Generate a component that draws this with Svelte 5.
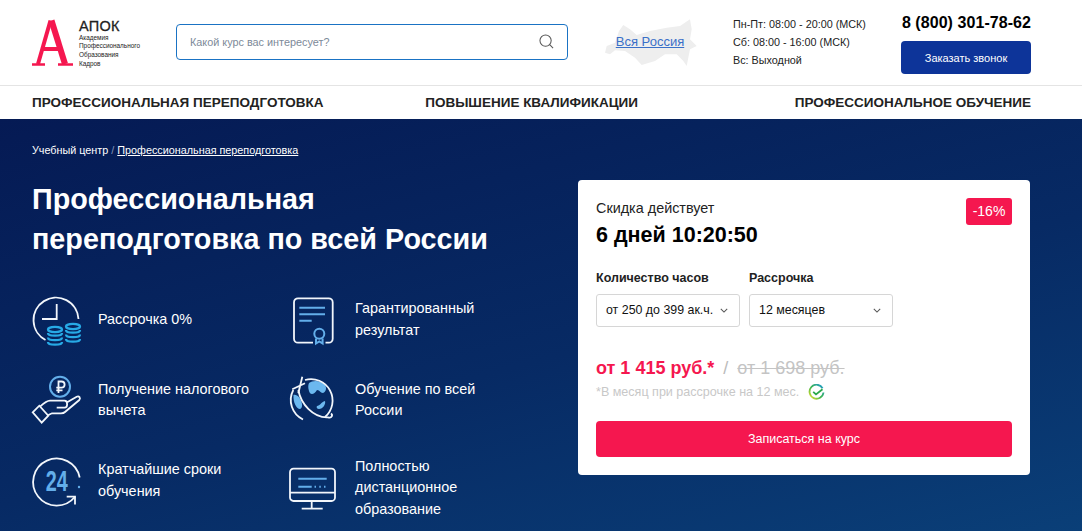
<script>
	const hours = ['Пн-Пт: 08:00 - 20:00 (МСК)', 'Сб: 08:00 - 16:00 (МСК)', 'Вс: Выходной'];
	const nav = ['Профессиональная переподготовка', 'Повышение квалификации', 'Профессиональное обучение'];
</script>

{#snippet chevron()}
	<svg class="chevron" width="8" height="5" viewBox="0 0 10 6"><path d="M1 1l4 4 4-4" /></svg>
{/snippet}

<div class="page">
	<header class="top">
		<div class="logo">
			<svg width="42" height="50" viewBox="0 0 42 50">
				<path class="logo-left" d="M18.5 3.5L6 47" />
				<path class="logo-right" d="M19.5 3.5L33 47" />
				<path class="logo-bar" d="M9 32H30" />
				<path class="logo-foot" d="M0 47.5H13M26 47.5H41" />
			</svg>
			<div class="logo-text">
				<strong>АПОК</strong>
				<span>Академия</span>
				<span>Профессионального</span>
				<span>Образования</span>
				<span>Кадров</span>
			</div>
		</div>

		<div class="search">
			<span>Какой курс вас интересует?</span>
			<svg width="15" height="15" viewBox="0 0 16 16">
				<circle cx="7" cy="7" r="6" />
				<path d="M11.4 11.4L15 15" />
			</svg>
		</div>

		<div class="region">
			<svg class="map" width="93" height="50" viewBox="0 0 93 50">
				<path d="M1 34.7L2.7 28L11 24.7L15 13L19.3 7L26 11.3L32.7 17L46 13L62.7 9.7L76 8L86 1.3L87.7 11.3L86 21.3L92.7 28L86 31.3L84.3 39.7L82.7 48L79.3 43L72.7 36.3L61 36.3L51 43L37.7 47L31 39.7L21 33L11 32.3L6 36.3Z" />
			</svg>
			<a href="#region">Вся Россия</a>
		</div>

		<div class="hours">
			{#each hours as line}
				<div>{line}</div>
			{/each}
		</div>

		<div class="contact">
			<div class="phone">8 (800) 301-78-62</div>
			<button class="call">Заказать звонок</button>
		</div>
	</header>

	<nav class="menu">
		{#each nav as item}
			<a href="#nav">{item}</a>
		{/each}
	</nav>

	<section class="hero">
		<div class="left">
			<div class="crumbs">Учебный центр <i>/</i> <a href="#crumb">Профессиональная переподготовка</a></div>
			<h1>Профессиональная<br />переподготовка по всей России</h1>

			<div class="features">
				<div class="col col-first">
					<div class="item">
						<svg class="icon" viewBox="0 0 52 52">
							<path class="w" d="M46.5 25A22.5 22.5 0 1 0 13.5 46" />
							<path class="w" d="M24.7 10V25H10" />
							<g class="coin">
								<ellipse cx="23" cy="35.5" rx="7" ry="2.6" />
								<path d="M16 39c0 3.6 14 3.6 14 0M16 43.5c0 3.6 14 3.6 14 0M16 48c0 3.6 14 3.6 14 0" />
								<ellipse cx="41" cy="32.5" rx="7" ry="2.6" />
								<path d="M34 36c0 3.6 14 3.6 14 0M34 40.5c0 3.6 14 3.6 14 0M34 45c0 3.6 14 3.6 14 0" />
							</g>
						</svg>
						<span>Рассрочка 0%</span>
					</div>
					<div class="item">
						<svg class="icon" viewBox="0 0 52 52">
							<circle class="b" cx="28" cy="12.7" r="10" />
							<path class="w" d="M26.5 19V7.5H29.5a3.1 3.1 0 0 1 0 6.2H24.3M24.3 16.4H30.5" />
							<path class="w" d="M0.7 38.3L7.3 31.7L16.3 41.7L9.7 48.7Z" />
							<path class="w" d="M8 32.7C12 29 15 26.7 18 26.7H32.5C36 26.7 36 33.7 32.5 33.7H24.7M34.7 28.5L44.7 22.7C47 21.5 49 24 47.3 26L33 38C32 39 31 39.3 29 39.3H20L16.3 41" />
						</svg>
						<span>Получение налогового<br />вычета</span>
					</div>
					<div class="item">
						<svg class="icon" viewBox="0 0 52 52">
							<path class="w" d="M47.7 22.5A23.5 23.5 0 1 0 43 41.7" />
							<path class="w" d="M34.7 41.7H43V49.5" />
							<circle class="dot" cx="47" cy="32" r="1.2" />
							<text class="num" x="13.8" y="36" textLength="22" lengthAdjust="spacingAndGlyphs">24</text>
						</svg>
						<span>Кратчайшие сроки<br />обучения</span>
					</div>
				</div>

				<div class="col">
					<div class="item">
						<svg class="icon" viewBox="0 0 52 52">
							<path class="w" d="M24 48.7H9a4 4 0 0 1-4-4V8.3a4 4 0 0 1 4-4H39.7a4 4 0 0 1 4 4V44.7a4 4 0 0 1-4 4H36.5" />
							<path class="b" d="M10.3 13.7H36M10.3 20.3H36M10.3 26.7H22.7" />
							<circle class="b" cx="30.3" cy="39.8" r="5" />
							<path class="b" d="M27 44.5V49.5L30.3 47.5L33.6 49.5V44.5" />
						</svg>
						<span>Гарантированный<br />результат</span>
					</div>
					<div class="item">
						<svg class="icon" viewBox="0 0 52 52">
							<path class="land" d="M4.5 21C8 20 12 24 13 30C13.5 33 12 35 10.5 35C7 34 4 28 4.5 21Z" />
							<path class="land" d="M20 9C24 6 31 6 36 11C38 14 37 18 34 19C31 19 31 16 28 16C25 21 21 21 20 17C19 14 19 11 20 9Z" />
							<path class="land" d="M28 32C31 32 32 28 36 27C37 30 34 35 30 35C28 35 27 33 28 32Z" />
							<path class="w" d="M16 6A21.5 21.5 0 0 1 36 43" />
							<path class="w" d="M4.3 16A21.5 21.5 0 0 0 14 45.5" />
							<path class="w" d="M9.3 16C12 30 24 44 39 43.3C43 44.5 44 41 42 39.5" />
							<path class="w" d="M13.3 2.7L9.3 19.3M3.3 15.3L16 9.3" />
						</svg>
						<span>Обучение по всей<br />России</span>
					</div>
					<div class="item long">
						<svg class="icon" viewBox="0 0 52 52">
							<rect class="w" x="1" y="6.7" width="45" height="32.3" rx="3.5" />
							<path class="w" d="M1 30.7H46M22.7 39V46.7M12.7 46.7H33.7" />
							<path class="b" d="M9.3 16.7H37.7M9.3 24.7H22.7" />
							<path class="b" d="M25.5 24.7H27M30.3 24.7H31.8M35 24.7H36.5" />
						</svg>
						<span>Полностью<br />дистанционное<br />образование</span>
					</div>
				</div>
			</div>
		</div>

		<div class="card">
			<div class="timer">
				<div>
					<div class="timer-label">Скидка действует</div>
					<div class="timer-value">6 дней 10:20:50</div>
				</div>
				<div class="badge">-16%</div>
			</div>

			<div class="fields">
				<div class="field">
					<div class="field-label">Количество часов</div>
					<div class="select">от 250 до 399 ак.ч.{@render chevron()}</div>
				</div>
				<div class="field">
					<div class="field-label">Рассрочка</div>
					<div class="select">12 месяцев{@render chevron()}</div>
				</div>
			</div>

			<div class="price">
				<b>от 1 415 руб.*</b>
				<i>/</i>
				<s>от 1 698 руб.</s>
			</div>
			<div class="note">
				*В месяц при рассрочке на 12 мес.
				<svg width="17" height="17" viewBox="0 0 17 17">
					<defs>
						<linearGradient id="sber" x1="0" y1="1" x2="1" y2="0">
							<stop offset="0" stop-color="#f2e52e" />
							<stop offset="0.45" stop-color="#3fb54a" />
							<stop offset="1" stop-color="#1c9ad6" />
						</linearGradient>
					</defs>
					<path d="M14.6 4.2A7 7 0 1 0 15.5 8.5" fill="none" stroke="url(#sber)" stroke-width="1.8" />
					<path d="M5.2 7.8L8 10.4L14.5 5.2" fill="none" stroke="#2ba84a" stroke-width="1.8" />
				</svg>
			</div>

			<button class="enroll">Записаться на курс</button>
		</div>
	</section>
</div>

<style>
	:global(body) {
		margin: 0;
		overflow: hidden;
		font-family: 'Liberation Sans', Arial, sans-serif;
	}

	.page {
		height: 531px;
		overflow: hidden;
		background: #fff;
	}

	.top {
		display: flex;
		align-items: center;
		height: 85px;
		padding: 0 51px 0 32px;
		box-sizing: border-box;
	}

	.logo {
		display: flex;
		width: 144px;
		flex: none;
		gap: 5px;
		align-items: flex-start;
	}

	.logo path {
		fill: none;
		stroke: #f5174f;
	}

	.logo .logo-left {
		stroke-width: 4;
	}

	.logo .logo-right {
		stroke-width: 6;
	}

	.logo .logo-bar {
		stroke-width: 4;
	}

	.logo .logo-foot {
		stroke-width: 2.5;
	}

	.logo-text {
		display: flex;
		flex-direction: column;
		color: #222;
		font-size: 6.4px;
		line-height: 8.6px;
	}

	.logo-text strong {
		font-size: 14.5px;
		font-weight: 400;
		line-height: 16px;
		margin-top: 1px;
		letter-spacing: 0.3px;
		-webkit-text-stroke: 0.3px #222;
	}

	.search {
		display: flex;
		align-items: center;
		justify-content: space-between;
		width: 392px;
		height: 36px;
		flex: none;
		box-sizing: border-box;
		margin-bottom: 2px;
		padding: 0 13px;
		border: 1px solid #1a73c4;
		border-radius: 4px;
		color: #7d8a99;
		font-size: 10.85px;
	}

	.search svg {
		fill: none;
		stroke: #555;
		stroke-width: 1.1;
	}

	.region {
		position: relative;
		display: flex;
		align-items: center;
		justify-content: center;
		width: 92px;
		height: 50px;
		margin-left: 36px;
		padding-bottom: 2px;
		box-sizing: border-box;
		flex: none;
	}

	.map {
		position: absolute;
		left: 0;
		top: 0;
		fill: #eeeeee;
		filter: blur(0.6px);
	}

	.region a {
		position: relative;
		color: #3a70c8;
		font-size: 13px;
	}

	.hours {
		width: 168px;
		margin-left: 37px;
		margin-bottom: 2px;
		flex: none;
		color: #222;
		font-size: 10.8px;
		line-height: 18px;
	}

	.contact {
		width: 130px;
		flex: none;
	}

	.phone {
		color: #000;
		font-size: 16px;
		font-weight: 700;
		letter-spacing: 0.06px;
		line-height: 20px;
		text-align: right;
		margin-top: 2px;
		margin-bottom: 8px;
	}

	.call {
		display: block;
		width: 130px;
		height: 33px;
		padding: 0;
		border: 0;
		border-radius: 4px;
		background: #0d3499;
		color: #fff;
		font: 11px 'Liberation Sans', Arial, sans-serif;
	}

	.menu {
		display: flex;
		justify-content: space-between;
		align-items: center;
		height: 33px;
		padding: 0 51px 0 32px;
		border-top: 1px solid #e4e4e4;
	}

	.menu a {
		color: #222;
		font-size: 13.5px;
		font-weight: 700;
		text-decoration: none;
		text-transform: uppercase;
	}

	.menu a:nth-child(2) {
		margin-right: 55px;
	}

	.hero {
		display: flex;
		justify-content: space-between;
		height: 412px;
		padding: 0 52px 0 32px;
		box-sizing: border-box;
		background: linear-gradient(165deg, #051a54 0%, #072a64 55%, #0a3f78 100%);
		color: #fff;
	}

	.left {
		width: 540px;
	}

	.crumbs {
		margin-top: 24px;
		font-size: 10.8px;
		line-height: 14px;
	}

	.crumbs i {
		color: #8796b8;
		font-style: normal;
	}

	.crumbs a {
		color: #fff;
	}

	h1 {
		margin: 22px 0 0;
		font-size: 28.75px;
		font-weight: 700;
		line-height: 40px;
	}

	.features {
		display: flex;
		margin-top: 34.5px;
	}

	.col {
		display: flex;
		flex-direction: column;
		gap: 28.5px;
	}

	.col-first {
		width: 257px;
		flex: none;
	}

	.item {
		display: flex;
		align-items: center;
		gap: 14px;
		min-height: 52px;
		font-size: 14.4px;
		line-height: 21.5px;
	}

	.item.long {
		margin-top: 1px;
	}

	.icon {
		width: 52px;
		height: 52px;
		flex: none;
		overflow: visible;
	}

	.w {
		fill: none;
		stroke: #f2f6fb;
		stroke-width: 1.8;
	}

	.b {
		fill: none;
		stroke: #63aeea;
		stroke-width: 2;
	}

	.dot {
		fill: #63aeea;
	}

	.land {
		fill: #6cb8ef;
	}

	.coin ellipse,
	.coin path {
		fill: none;
		stroke: #27aae6;
		stroke-width: 2.3;
	}

	.num {
		fill: #63aeea;
		font-size: 29px;
		font-weight: 700;
	}

	.card {
		width: 452px;
		height: 295px;
		margin-top: 61px;
		padding: 18px;
		box-sizing: border-box;
		border-radius: 4px;
		background: #fff;
		color: #000;
	}

	.timer {
		display: flex;
		justify-content: space-between;
		align-items: flex-start;
		height: 62px;
	}

	.timer-label {
		margin-top: 2px;
		font-size: 14.4px;
		line-height: 16px;
		color: #222;
	}

	.timer-value {
		margin-top: 6px;
		font-size: 21.5px;
		font-weight: 700;
		line-height: 26px;
	}

	.badge {
		width: 46px;
		height: 27px;
		border-radius: 3px;
		background: #f5174f;
		color: #fff;
		font-size: 14px;
		line-height: 27px;
		text-align: center;
	}

	.fields {
		display: flex;
		gap: 9px;
		margin-top: 10px;
	}

	.field-label {
		font-size: 12.5px;
		font-weight: 700;
		line-height: 16px;
		color: #222;
		margin-bottom: 8px;
	}

	.select {
		display: flex;
		align-items: center;
		justify-content: space-between;
		width: 144px;
		height: 33px;
		box-sizing: border-box;
		padding: 0 11px 1px 9px;
		border: 1px solid #d6d6d6;
		border-radius: 3px;
		font-size: 12.4px;
		color: #111;
		white-space: nowrap;
	}

	.chevron {
		flex: none;
		fill: none;
		stroke: #555;
		stroke-width: 1.3;
	}

	.price {
		display: flex;
		align-items: baseline;
		margin-top: 30px;
		font-size: 18px;
		line-height: 22px;
	}

	.price b {
		color: #f5174f;
	}

	.price i {
		margin: 0 9px;
		color: #bbb;
		font-style: normal;
	}

	.price s {
		color: #c4c4c4;
	}

	.note {
		display: flex;
		align-items: center;
		gap: 9px;
		height: 20px;
		margin-top: 3px;
		color: #c8c8c8;
		font-size: 12.55px;
	}

	.enroll {
		display: block;
		width: 100%;
		height: 36px;
		margin-top: 19px;
		border: 0;
		border-radius: 4px;
		background: #f5174f;
		color: #fff;
		font: 12.5px 'Liberation Sans', Arial, sans-serif;
	}
</style>
